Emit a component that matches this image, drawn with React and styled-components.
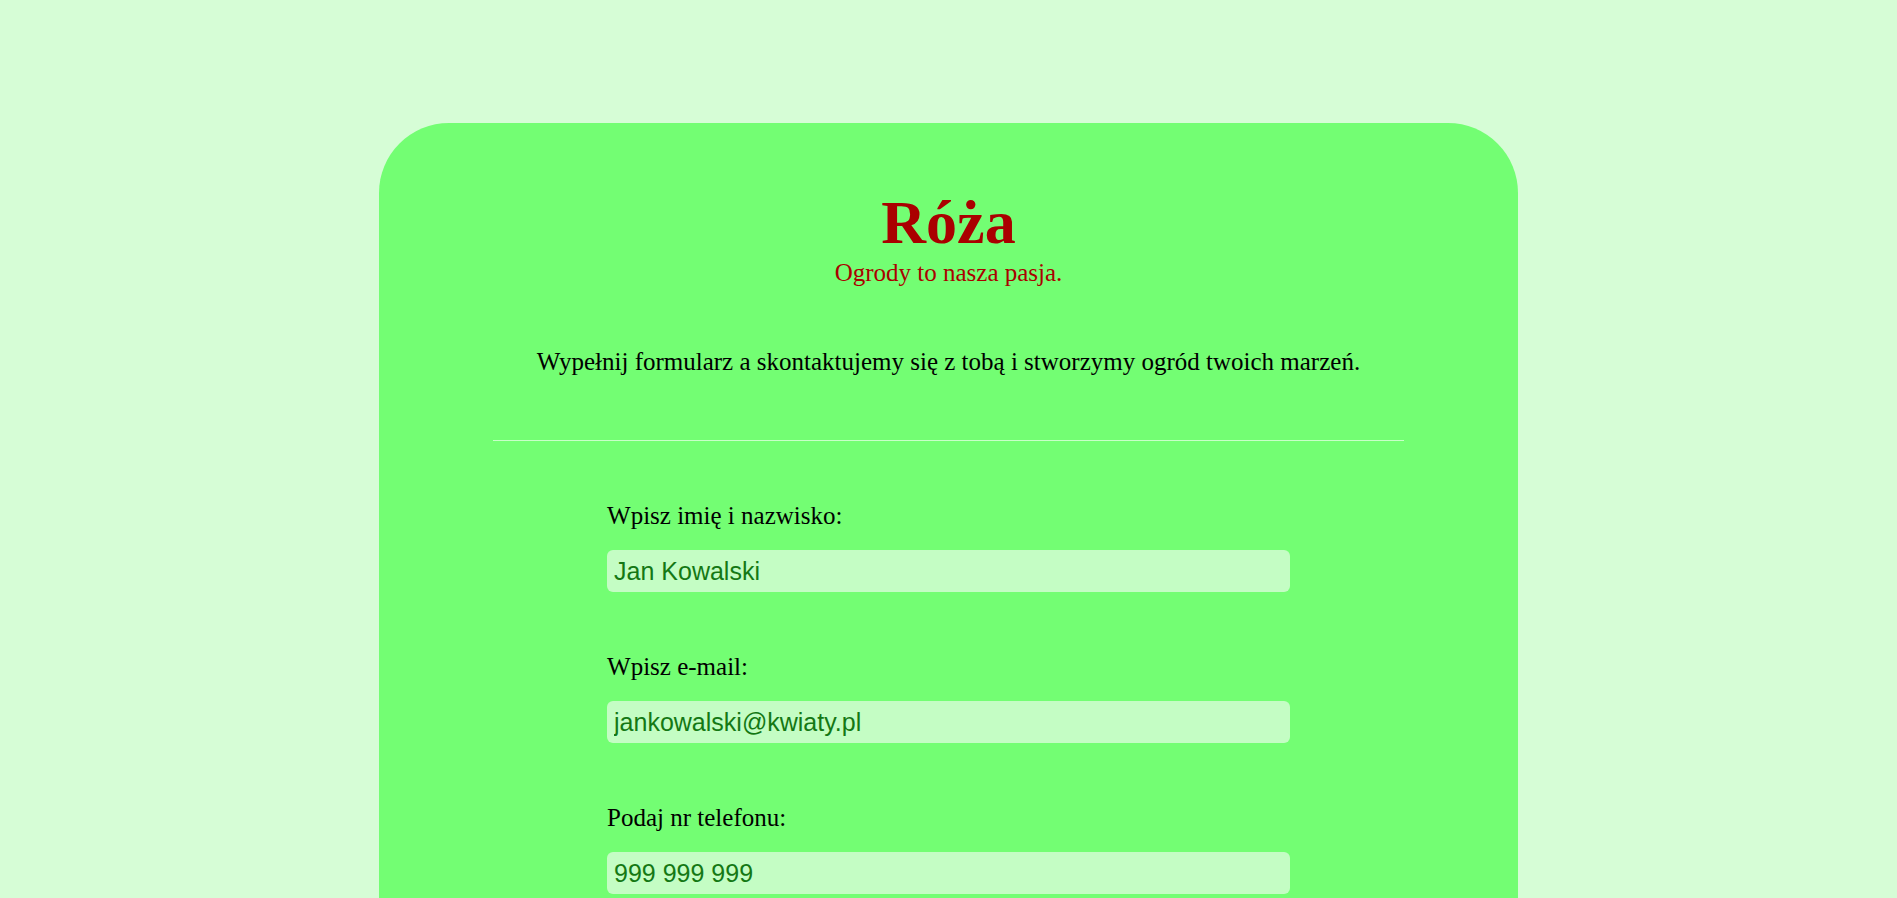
import React from "react";
import styled, { createGlobalStyle } from "styled-components";

const fields = [
  { id: "name", label: "Wpisz imię i nazwisko:", type: "text", placeholder: "Jan Kowalski" },
  { id: "email", label: "Wpisz e-mail:", type: "email", placeholder: "jankowalski@kwiaty.pl" },
  { id: "phone", label: "Podaj nr telefonu:", type: "tel", placeholder: "999 999 999" },
];

export default function App() {
  return (
    <>
      <GlobalStyle />
      <Card>
        <Header>
          <Title>Róża</Title>
          <Tagline>Ogrody to nasza pasja.</Tagline>
        </Header>
        <Intro>
          Wypełnij formularz a skontaktujemy się z tobą i stworzymy ogród twoich marzeń.
        </Intro>
        <Divider />
        <Form onSubmit={(e) => e.preventDefault()}>
          {fields.map((f) => (
            <Field key={f.id}>
              <Label htmlFor={f.id}>{f.label}</Label>
              <Input id={f.id} type={f.type} placeholder={f.placeholder} />
            </Field>
          ))}
        </Form>
      </Card>
    </>
  );
}

const GlobalStyle = createGlobalStyle`
  html, body {
    margin: 0;
    padding: 0;
    background-color: #d6fdd6;
    font-family: "Liberation Serif", "Times New Roman", serif;
  }
`;

const Card = styled.main`
  width: 60%;
  margin: 123px auto 0;
  padding: 68px 0 120px;
  background-color: #73fe73;
  border-radius: 70px;
`;

const Header = styled.header`
  display: flex;
  flex-direction: column;
  align-items: center;
  color: #aa0000;
`;

const Title = styled.h1`
  margin: 0;
  font-size: 62px;
  line-height: 62px;
  font-weight: bold;
`;

const Tagline = styled.p`
  margin: 5px 0 0;
  font-size: 25px;
  line-height: 30px;
`;

const Intro = styled.p`
  margin: 59px 0 0;
  text-align: center;
  font-size: 25px;
  line-height: 30px;
  color: #000;
`;

const Divider = styled.hr`
  width: 80%;
  margin: 63px auto 0;
  border: none;
  border-top: 1px solid #c8ffc8;
`;

const Form = styled.form`
  width: 60%;
  margin: 0 auto;
  padding-top: 60px;
  display: flex;
  flex-direction: column;
  gap: 60px;
`;

const Field = styled.div`
  display: flex;
  flex-direction: column;
  gap: 19px;
`;

const Label = styled.label`
  font-size: 25px;
  line-height: 30px;
  color: #000;
`;

const Input = styled.input`
  box-sizing: border-box;
  width: 100%;
  height: 42px;
  padding: 0 7px;
  border: none;
  border-radius: 6px;
  background-color: #c4fdc4;
  font-family: "Liberation Sans", Arial, sans-serif;
  font-size: 25px;
  color: #147814;
  outline: none;

  &::placeholder {
    color: #147814;
    opacity: 1;
  }
`;
